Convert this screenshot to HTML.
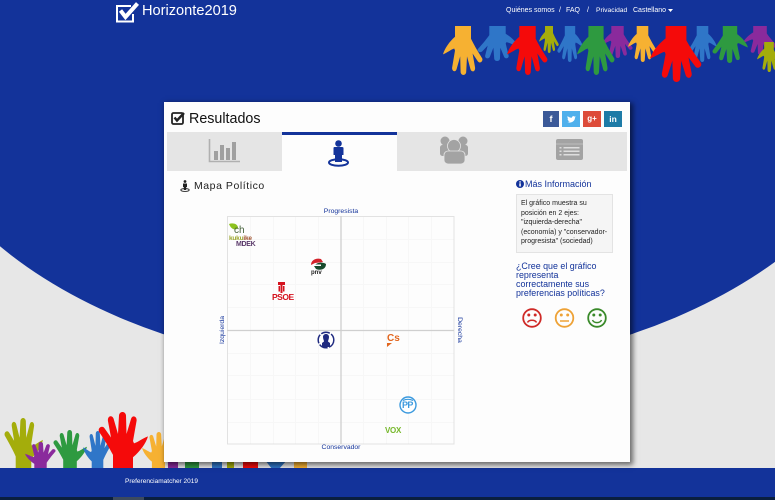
<!DOCTYPE html>
<html lang="es">
<head>
<meta charset="utf-8">
<title>Horizonte2019</title>
<style>
*{box-sizing:border-box}
html,body{margin:0;padding:0;width:775px;height:500px;overflow:hidden;background:#e7e7e7}
body{font-family:"Liberation Sans",sans-serif;position:relative}
#w{position:absolute;left:0;top:0;width:775px;height:500px;filter:blur(.3px);overflow:hidden}
.a{position:absolute;white-space:nowrap}
svg{position:absolute;display:block;overflow:visible}
.tab{position:absolute;top:132px;height:39px;background:#e5e5e5}
.soc{position:absolute;top:111px;height:16px;color:#fff;font-size:9px;font-weight:bold;text-align:center;line-height:16px}
.box{position:absolute;left:516px;top:194px;width:97px;height:59px;background:#f5f5f5;border:1px solid #e3e3e3}
.box div,.q div{position:absolute;white-space:nowrap}
.lg{position:absolute;white-space:nowrap;font-weight:bold;line-height:1}
.n{position:absolute;top:5px;font-size:7px;line-height:11px;color:#fff;white-space:nowrap}
</style>
</head>
<body>
<div id="w">
<svg width="775" height="500" style="left:0;top:0" viewBox="0 0 775 500">
  <defs>
    <path id="h" fill="currentColor" d="M30 100L30 74C24 64 16 52 2 34C-1 28 8 22 13 28L26 44L20 16C18 6 30 4 32 14L40 38L42 6C43-2 55-2 56 6L57 38L66 12C69 4 79 8 77 16L70 50L72 54C80 52 88 46 100 42C96 54 84 68 70 78L70 100Z"/>
    <symbol id="u" viewBox="0 0 100 100" preserveAspectRatio="none"><use href="#h"/></symbol>
    <symbol id="m" viewBox="0 0 100 100" preserveAspectRatio="none"><use href="#h" transform="matrix(-1 0 0 1 100 0)"/></symbol>
    <symbol id="d" viewBox="0 0 100 100" preserveAspectRatio="none"><use href="#h" transform="rotate(180 50 50)"/></symbol>
    <symbol id="e" viewBox="0 0 100 100" preserveAspectRatio="none"><use href="#h" transform="matrix(1 0 0 -1 0 100)"/></symbol>
  </defs>
  <rect width="775" height="500" fill="#e7e7e7"/>
  <ellipse cx="397.5" cy="54" rx="500" ry="317" fill="#13339a"/>
  <rect width="775" height="54" fill="#13339a"/>

  <!-- top hands -->
  <use href="#e" x="477" y="26" width="41" height="35" style="color:#2f76c8"/>
  <use href="#d" x="443" y="26" width="40" height="49" style="color:#f6b132"/>
  <use href="#e" x="557" y="26" width="26" height="36" style="color:#2f76c8"/>
  <use href="#d" x="539" y="26" width="20" height="27" style="color:#a4ad0b"/>
  <use href="#d" x="507" y="26" width="41" height="49" style="color:#f50a0a"/>
  <use href="#d" x="602" y="26" width="31" height="32" style="color:#8a2a9c"/>
  <use href="#d" x="577" y="26" width="38" height="49" style="color:#2e9a40"/>
  <use href="#d" x="628" y="26" width="29" height="36" style="color:#f6b132"/>
  <use href="#e" x="688" y="26" width="29" height="36" style="color:#2f76c8"/>
  <use href="#d" x="650" y="26" width="52" height="56" style="color:#f50a0a"/>
  <use href="#d" x="743" y="26" width="34" height="29" style="color:#8a2a9c"/>
  <use href="#e" x="712" y="26" width="36" height="37" style="color:#2e9a40"/>
  <use href="#d" x="757" y="42" width="24" height="30" style="color:#a4ad0b"/>

  <!-- bottom hands -->
  <use href="#u" x="4" y="418" width="39" height="52" style="color:#a4ad0b"/>
  <use href="#m" x="25" y="442" width="31" height="28" style="color:#8a2a9c"/>
  <use href="#u" x="53" y="430" width="34" height="40" style="color:#2e9a40"/>
  <use href="#m" x="142" y="432" width="33" height="38" style="color:#f6b132"/>
  <use href="#m" x="83" y="431" width="29" height="39" style="color:#2f76c8"/>
  <use href="#u" x="98" y="412" width="50" height="58" style="color:#f50a0a"/>
  <!-- wrist stubs below the card -->
  <rect x="168" y="460" width="10" height="9" fill="#8a2a9c"/>
  <rect x="185" y="460" width="14" height="9" fill="#2e9a40"/>
  <rect x="212" y="460" width="10" height="9" fill="#2f76c8"/>
  <rect x="227" y="460" width="7" height="9" fill="#a4ad0b"/>
  <rect x="243" y="460" width="15" height="9" fill="#f50a0a"/>
  <path d="M265 460H287L279 469H272Z" fill="#2f76c8"/>
  <rect x="294" y="460" width="13" height="9" fill="#f6b132"/>

  <!-- footer -->
  <rect x="0" y="468" width="775" height="29" fill="#13339a"/>
  <rect x="0" y="497" width="775" height="3" fill="#0a1f3f"/>
  <rect x="113" y="497" width="31" height="3" fill="#3c4a5e"/>
</svg>

<!-- header -->
<svg style="left:116px;top:2px" width="24" height="21" viewBox="0 0 24 21">
  <path d="M15 4H1V19.500H17V12" fill="none" stroke="#fff" stroke-width="2"/>
  <path d="M4.500 8.500L9.500 15L21.500 1.500" fill="none" stroke="#fff" stroke-width="4"/>
</svg>
<div class="a" style="left:142px;top:2px;font-size:14.600px;line-height:19px;color:#fff">Horizonte2019</div>
<div class="n" style="left:506px">Quiénes somos</div>
<div class="n" style="left:559px">/</div>
<div class="n" style="left:566px">FAQ</div>
<div class="n" style="left:587px">/</div>
<div class="n" style="left:596px;font-size:6.700px">Privacidad</div>
<div class="n" style="left:633px">Castellano</div>
<svg style="left:668px;top:9px" width="5" height="3" viewBox="0 0 5 3"><path d="M0 0H5L2.500 3Z" fill="#fff"/></svg>

<!-- footer text -->
<div class="a" style="left:125px;top:477px;font-size:6.500px;line-height:10px;color:#fff">Preferenciamatcher 2019</div>

<!-- card -->
<div class="a" style="left:164px;top:102px;width:466px;height:360px;background:#fdfdfd;box-shadow:2px 2px 5px 1px rgba(0,0,0,.55)"></div>

<svg style="left:171px;top:111px" width="15" height="14" viewBox="0 0 15 14">
  <rect x="1" y="2" width="11" height="11" rx="1.500" fill="none" stroke="#222" stroke-width="1.800"/>
  <path d="M3.500 6.500L6 9.500L13 2" fill="none" stroke="#222" stroke-width="2.400"/>
</svg>
<div class="a" style="left:189px;top:110px;font-size:14.300px;line-height:18px;color:#111">Resultados</div>

<div class="soc" style="left:543px;width:16px;background:#3b5998">f</div>
<div class="soc" style="left:562px;width:18px;background:#4fb0ec">
  <svg style="left:5px;top:5px" width="9" height="7" viewBox="0 0 9 7"><path d="M0 6C3 7.500 8 6 8 1.500L9 .5 7.800.7C7-.3 5-.1 4.800 1.800 3 1.800 1.500 1 .7 0 .2 1.200.5 2.300 1.300 3L.5 2.800C.6 3.800 1.200 4.400 2 4.600 1.600 4.700 1.300 4.700 1 4.600 1.300 5.300 1.900 5.700 2.700 5.700 1.900 6.200 1 6.200 0 6Z" fill="#fff"/></svg>
</div>
<div class="soc" style="left:583px;width:18px;background:#dd4b39;font-size:8px">g+</div>
<div class="soc" style="left:604px;width:18px;background:#1d7ba7;font-size:8.500px">in</div>

<!-- tabs -->
<div class="tab" style="left:167px;width:115px"></div>
<div class="tab" style="left:397px;width:230px"></div>
<div class="a" style="left:282px;top:132px;width:115px;height:3px;background:#13339a"></div>

<svg style="left:208px;top:139px" width="33" height="24" viewBox="0 0 33 24">
  <path d="M1.500 0V22.500H32" fill="none" stroke="#b0b0b0" stroke-width="1.600"/>
  <rect x="6" y="12" width="4" height="9" fill="#a0a0a0"/><rect x="12" y="6" width="4" height="15" fill="#a0a0a0"/>
  <rect x="18" y="9" width="4" height="12" fill="#a0a0a0"/><rect x="24" y="3" width="4" height="18" fill="#a0a0a0"/>
</svg>
<svg style="left:327px;top:140px" width="24" height="27" viewBox="0 0 24 27">
  <circle cx="11.500" cy="3.500" r="3.300" fill="#13339a"/>
  <path d="M6.500 8C6.500 7 7.500 7 8 7H15C16 7 16.500 7.500 16.500 8V15H15V22H8V15H6.500Z" fill="#13339a"/>
  <ellipse cx="11.500" cy="22.500" rx="9.500" ry="3.300" fill="none" stroke="#13339a" stroke-width="2"/>
</svg>
<svg style="left:440px;top:136px" width="29" height="29" viewBox="0 0 29 29" fill="#a3a3a3">
  <circle cx="5" cy="5" r="4.500"/><circle cx="23" cy="5" r="4.500"/>
  <rect x="0" y="9" width="28" height="11" rx="2.500"/>
  <circle cx="14" cy="10" r="6.500" stroke="#e5e5e5" stroke-width=".8"/>
  <rect x="4" y="15" width="21" height="13" rx="4" stroke="#e5e5e5" stroke-width=".8"/>
</svg>
<svg style="left:556px;top:139px" width="28" height="22" viewBox="0 0 28 22">
  <rect width="27" height="21" rx="2" fill="#a3a3a3"/>
  <rect x="0" y="4.500" width="27" height="1" fill="#bcbcbc"/>
  <g fill="#dedede"><rect x="3.500" y="8" width="2" height="1.500"/><rect x="3.500" y="11.500" width="2" height="1.500"/><rect x="3.500" y="15" width="2" height="1.500"/><rect x="7.500" y="8" width="16" height="1.500"/><rect x="7.500" y="11.500" width="16" height="1.500"/><rect x="7.500" y="15" width="16" height="1.500"/></g>
</svg>

<!-- map title -->
<svg style="left:180px;top:180px" width="10" height="12" viewBox="0 0 10 12">
  <circle cx="5" cy="1.500" r="1.400" fill="#222"/><path d="M3 3.500H7V7H6.200V10H3.800V7H3Z" fill="#222"/>
  <ellipse cx="5" cy="10" rx="4.200" ry="1.400" fill="none" stroke="#222" stroke-width=".9"/>
</svg>
<div class="a" style="left:194px;top:180px;font-size:10.500px;line-height:13px;color:#222;letter-spacing:.55px">Mapa Político</div>

<!-- chart -->
<svg style="left:227px;top:216px" width="228" height="229" viewBox="0 0 228 229">
  <g stroke="#f7f7f7" stroke-width="1">
    <path d="M23.500 0V228M46.500 0V228M68.500 0V228M91.500 0V228M136.500 0V228M159.500 0V228M181.500 0V228M204.500 0V228"/>
    <path d="M0 23.500H227M0 46.500H227M0 68.500H227M0 91.500H227M0 137.500H227M0 159.500H227M0 183.500H227M0 206.500H227"/>
  </g>
  <rect x=".5" y=".5" width="226.500" height="227.500" fill="none" stroke="#e2e2e2"/>
  <path d="M114 0V228M0 114.500H227" stroke="#cfcfcf" stroke-width="1.300"/>
</svg>
<div class="a" style="left:301px;top:207px;width:80px;text-align:center;font-size:6.800px;line-height:10px;color:#13339a">Progresista</div>
<div class="a" style="left:301px;top:443px;width:80px;text-align:center;font-size:6.800px;line-height:10px;color:#13339a">Conservador</div>
<div class="a" style="left:193px;top:325px;width:60px;text-align:center;font-size:6.800px;line-height:10px;color:#13339a;transform:rotate(-90deg)">Izquierda</div>
<div class="a" style="left:429px;top:325px;width:60px;text-align:center;font-size:6.800px;line-height:10px;color:#13339a;transform:rotate(90deg)">Derecha</div>

<!-- party logos -->
<svg style="left:228px;top:223px" width="14" height="10" viewBox="0 0 14 10"><path d="M1 1C5-.5 10 1 10 5 7 8 3 6 1 1Z" fill="#8dc21f"/></svg>
<div class="lg" style="left:234px;top:226px;font-size:10px;font-weight:normal;color:#44603a">ch</div>
<div class="lg" style="left:229px;top:236px;font-size:6.500px;color:#9aa52a;letter-spacing:-.2px">kuku<span style="color:#a0522d">ike</span></div>
<div class="lg" style="left:236px;top:241px;font-size:7px;color:#5b3a6b;letter-spacing:-.3px">MDEK</div>

<svg style="left:310px;top:258px" width="17" height="14" viewBox="0 0 17 14">
  <path d="M1 7C1 2 6-.5 11 1L13 4 5 5Z" fill="#d3222a"/>
  <path d="M4 8C7 4 13 4 16 6 16 11 11 13 6 11Z" fill="#174a2c"/>
  <path d="M3 6.500H11V8H3Z" fill="#fff"/>
</svg>
<div class="lg" style="left:311px;top:270px;font-size:6px;color:#222">pnv</div>

<svg style="left:278px;top:282px" width="7" height="11" viewBox="0 0 7 11"><path d="M0 0H7V3H4.500V11H2.500V3H0ZM.5 4H2V9.500H.5ZM5 4H6.500V9.500H5Z" fill="#d5121e"/></svg>
<div class="lg" style="left:272px;top:293px;font-size:8.500px;color:#d5121e;letter-spacing:-.5px">PSOE</div>

<svg style="left:317px;top:331px" width="18" height="18" viewBox="0 0 18 18">
  <circle cx="9" cy="9" r="7.800" fill="#fff" stroke="#1f2a80" stroke-width="1.500" stroke-dasharray="9 1.500"/>
  <path d="M6 6C6 2 12 2 12 6 12 8 11 9.500 11 10.500L13 12V16H5V12L7 10.500C7 9.500 6 8 6 6Z" fill="#1f2a80"/>
</svg>

<div class="lg" style="left:387px;top:334px;font-size:10px;color:#e2661e">Cs</div>
<svg style="left:387px;top:343px" width="5" height="4" viewBox="0 0 5 4"><path d="M0 0H5L0 4Z" fill="#e2661e"/></svg>

<svg style="left:399px;top:396px" width="18" height="18" viewBox="0 0 18 18">
  <circle cx="9" cy="9" r="8" fill="#fff" stroke="#3c9ade" stroke-width="1.400"/>
  <path d="M4 4.500C7 3 11 3 14 4.500" fill="none" stroke="#3c9ade" stroke-width="1.200"/>
</svg>
<div class="lg" style="left:402px;top:401px;font-size:9px;color:#3c9ade;letter-spacing:-.6px">PP</div>

<div class="lg" style="left:385px;top:427px;font-size:8px;color:#76b82a;letter-spacing:-.3px">VOX</div>

<!-- right column -->
<svg style="left:516px;top:180px" width="8" height="8" viewBox="0 0 8 8">
  <circle cx="4" cy="4" r="4" fill="#13339a"/><rect x="3.300" y="3.300" width="1.500" height="3.200" fill="#fff"/><rect x="3.300" y="1.300" width="1.500" height="1.300" fill="#fff"/>
</svg>
<div class="a" style="left:525px;top:178px;font-size:9px;line-height:12px;color:#13339a">Más Información</div>

<div class="box">
  <div style="left:4px;top:4px;font-size:7px;line-height:10px;color:#222">El gráfico muestra su</div>
  <div style="left:4px;top:14px;font-size:7px;line-height:10px;color:#222">posición en 2 ejes:</div>
  <div style="left:4px;top:23px;font-size:7px;line-height:10px;color:#222">"izquierda-derecha"</div>
  <div style="left:4px;top:33px;font-size:7px;line-height:10px;color:#222">(economía) y "conservador-</div>
  <div style="left:4px;top:42px;font-size:7px;line-height:10px;color:#222">progresista" (sociedad)</div>
</div>

<div class="q" style="position:absolute;left:516px;top:0;color:#13339a;font-size:8.900px;line-height:11px">
  <div style="top:261px">¿Cree que el gráfico</div>
  <div style="top:270px">representa</div>
  <div style="top:279px">correctamente sus</div>
  <div style="top:288px">preferencias políticas?</div>
</div>

<svg style="left:521px;top:307px" width="88" height="22" viewBox="0 0 88 22" fill="none" stroke-width="1.800">
  <g stroke="#cf2a27">
    <circle cx="11" cy="11" r="8.800"/>
    <path d="M6.500 15.500C8 12.500 14 12.500 15.500 15.500" stroke-width="1.500"/>
    <circle cx="7.800" cy="8" r=".6" fill="#cf2a27"/><circle cx="14.200" cy="8" r=".6" fill="#cf2a27"/>
  </g>
  <g stroke="#eea236">
    <circle cx="43.500" cy="11" r="8.800"/>
    <path d="M39 14H48" stroke-width="1.500"/>
    <circle cx="40.300" cy="8" r=".6" fill="#eea236"/><circle cx="46.700" cy="8" r=".6" fill="#eea236"/>
  </g>
  <g stroke="#3a8a2a">
    <circle cx="76" cy="11" r="8.800"/>
    <path d="M71.500 13C73 16.500 79 16.500 80.500 13" stroke-width="1.500"/>
    <circle cx="72.800" cy="8" r=".6" fill="#3a8a2a"/><circle cx="79.200" cy="8" r=".6" fill="#3a8a2a"/>
  </g>
</svg>
</div>
</body>
</html>
